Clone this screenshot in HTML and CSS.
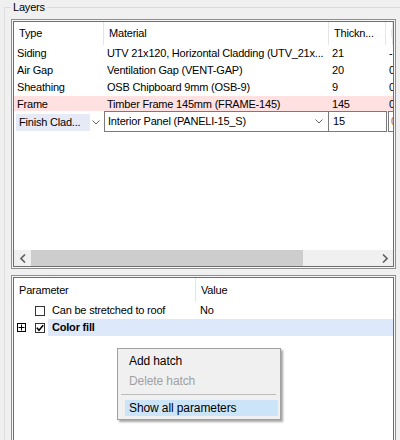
FILE: index.html
```html
<!DOCTYPE html>
<html>
<head>
<meta charset="utf-8">
<link rel="stylesheet" href="styles.css">
</head>
<body>
<fieldset class="group">
  <legend class="group-title">Layers</legend>
  <div class="frame frame-top">
    <div class="frame-inner">
      <div class="grid">
        <div class="row head">
          <div class="c c1">Type</div>
          <div class="c c2">Material</div>
          <div class="c c3">Thickn...</div>
          <div class="c c4">I</div>
        </div>
        <div class="row">
          <div class="c c1">Siding</div>
          <div class="c c2">UTV 21x120, Horizontal Cladding (UTV_21x...</div>
          <div class="c c3">21</div>
          <div class="c c4">-1</div>
        </div>
        <div class="row">
          <div class="c c1">Air Gap</div>
          <div class="c c2">Ventilation Gap (VENT-GAP)</div>
          <div class="c c3">20</div>
          <div class="c c4">0</div>
        </div>
        <div class="row">
          <div class="c c1">Sheathing</div>
          <div class="c c2">OSB Chipboard 9mm (OSB-9)</div>
          <div class="c c3">9</div>
          <div class="c c4">0</div>
        </div>
        <div class="row pink">
          <div class="c c1">Frame</div>
          <div class="c c2">Timber Frame 145mm (FRAME-145)</div>
          <div class="c c3">145</div>
          <div class="c c4">0</div>
        </div>
        <div class="row edit">
          <div class="combo combo-type">
            <span class="combo-sel">Finish Clad...</span>
            <svg class="chev" width="8" height="5" viewBox="0 0 8 5"><path d="M0.5 0.5 L4 4 L7.5 0.5" fill="none" stroke="#606060" stroke-width="1"/></svg>
          </div>
          <div class="combo combo-mat">
            <span class="combo-text">Interior Panel (PANELI-15_S)</span>
            <svg class="chev" width="8" height="5" viewBox="0 0 8 5"><path d="M0.5 0.5 L4 4 L7.5 0.5" fill="none" stroke="#606060" stroke-width="1"/></svg>
          </div>
          <div class="tbox">15</div>
          <div class="tbox tbox-last">0</div>
        </div>
      </div>
      <div class="hscroll">
        <div class="sarrow">
          <svg width="6" height="9" viewBox="0 0 6 9"><path d="M5 0.5 L1 4.5 L5 8.5" fill="none" stroke="#606060" stroke-width="1.6"/></svg>
        </div>
        <div class="track"><div class="thumb"></div></div>
        <div class="sarrow">
          <svg width="6" height="9" viewBox="0 0 6 9"><path d="M1 0.5 L5 4.5 L1 8.5" fill="none" stroke="#606060" stroke-width="1.6"/></svg>
        </div>
      </div>
    </div>
  </div>
  <div class="frame frame-bottom">
    <div class="frame-inner">
      <div class="prow phead">
        <div class="pc pc1">Parameter</div>
        <div class="pc pc2">Value</div>
      </div>
      <div class="prow">
        <div class="pc pc1 pcell">
          <span class="exp-space"></span>
          <span class="chk"></span>
          <span class="plabel">Can be stretched to roof</span>
        </div>
        <div class="pc pc2 pval">No</div>
      </div>
      <div class="prow">
        <div class="pc pc1 pcell">
          <span class="exp">
            <svg width="7" height="7" viewBox="0 0 7 7"><path d="M0.5 3.5 H6.5 M3.5 0.5 V6.5" stroke="#000" stroke-width="1"/></svg>
          </span>
          <span class="chk">
            <svg width="8" height="8" viewBox="0 0 8 8"><path d="M0.8 3.8 L3 6.2 L7.2 1.2" fill="none" stroke="#000" stroke-width="1.6"/></svg>
          </span>
          <span class="plabel hl bold">Color fill</span>
        </div>
        <div class="pc pc2 pval hl"></div>
      </div>
    </div>
  </div>
</fieldset>

<div class="menu">
  <div class="mitem">Add hatch</div>
  <div class="mitem disabled">Delete hatch</div>
  <div class="msep"></div>
  <div class="mitem active">Show all parameters</div>
</div>
</body>
</html>
```

FILE: styles.css
```css
html, body {
  margin: 0;
  padding: 0;
  width: 400px;
  height: 440px;
  overflow: hidden;
  background: #f0f0f0;
}

body {
  position: relative;
  font-family: "Liberation Sans", Arial, sans-serif;
  font-size: 11px;
  letter-spacing: -0.2px;
  color: #000;
}

.group {
  margin: 0 0 0 4px;
  padding: 4px 0 0 6px;
  border: 1px solid #dcdcdc;
  width: 420px;
  height: 480px;
  box-sizing: border-box;
  min-width: 0;
}

.group-title {
  padding: 0 2px;
  margin: 0;
  line-height: 15px;
  font-size: 11px;
}

.frame {
  width: 385px;
  box-sizing: border-box;
  border: 1px solid #8e8e8e;
  padding: 1px;
  background: #f7f7f7;
}

.frame-inner {
  border: 1px solid #6e6e6e;
  background: #fff;
  display: flex;
  flex-direction: column;
  overflow: hidden;
}

.frame-top .frame-inner {
  height: 246px;
  box-sizing: border-box;
}

.frame-bottom {
  margin-top: 6px;
}

.frame-bottom .frame-inner {
  height: 200px;
}

.grid {
  flex: 1;
  overflow: hidden;
}

.row {
  display: flex;
  height: 17px;
  line-height: 17px;
  white-space: nowrap;
}

.row.head {
  height: 23px;
  line-height: 23px;
}

.c {
  overflow: hidden;
  box-sizing: border-box;
  padding-left: 3px;
}

.head .c {
  padding-left: 5px;
  border-right: 1px solid #e5e5e5;
}

.c1 { width: 90px; }
.c2 { width: 225px; }
.c3 { width: 57px; }
.c4 { flex: 1; min-width: 0; }

.pink {
  background: #ffe1e1;
}

.row.edit {
  height: 21px;
  line-height: 19px;
  margin-top: -2px;
}

.combo {
  display: flex;
  align-items: center;
  box-sizing: border-box;
  height: 21px;
}

.combo-type {
  width: 90px;
  padding: 2px 4px 1px 2px;
  background: #fff;
}

.combo-sel {
  flex: 1;
  height: 17px;
  line-height: 17px;
  background: #e6eaf7;
  padding-left: 3px;
  overflow: hidden;
}

.combo-type .chev {
  margin-left: 2px;
}

.combo-mat {
  width: 225px;
  border: 1px solid #7a7a7a;
  padding: 0 5px 0 3px;
  background: #fff;
}

.combo-text {
  flex: 1;
  overflow: hidden;
}

.tbox {
  box-sizing: border-box;
  width: 59px;
  height: 21px;
  margin-left: -1px;
  border: 1px solid #7a7a7a;
  padding-left: 4px;
  background: #fff;
}

.tbox-last {
  flex: 1;
  width: auto;
  margin-left: 1px;
  border-right: none;
  padding-left: 2px;
  color: #c06a00;
  overflow: hidden;
}

.hscroll {
  display: flex;
  height: 16px;
  background: #f0f0f0;
}

.sarrow {
  width: 17px;
  display: flex;
  align-items: center;
  justify-content: center;
}

.track {
  flex: 1;
  display: flex;
}

.thumb {
  width: 272px;
  background: #cdcdcd;
}

.prow {
  display: flex;
  height: 17px;
  line-height: 17px;
  white-space: nowrap;
}

.prow.phead {
  height: 24px;
  line-height: 24px;
}

.pc {
  box-sizing: border-box;
}

.pc1 {
  width: 182px;
}

.phead .pc {
  padding-left: 5px;
}

.phead .pc1 {
  border-right: 1px solid #e5e5e5;
}

.pc2 {
  flex: 1;
}

.pcell {
  display: flex;
  align-items: center;
}

.exp-space,
.exp {
  width: 9px;
  height: 9px;
  margin-left: 3px;
  box-sizing: border-box;
  flex: none;
}

.exp {
  border: 1px solid #000;
  display: flex;
  align-items: center;
  justify-content: center;
}

.chk {
  width: 10px;
  height: 10px;
  margin-left: 9px;
  box-sizing: border-box;
  border: 1px solid #333;
  background: #fff;
  display: flex;
  align-items: center;
  justify-content: center;
  flex: none;
}

.plabel {
  flex: 1;
  height: 17px;
  margin-left: 3px;
  padding-left: 4px;
}

.pval {
  padding-left: 4px;
}

.hl {
  background: #dde8fb;
}

.bold {
  font-weight: bold;
}

.menu {
  position: absolute;
  left: 117px;
  top: 348px;
  width: 164px;
  box-sizing: border-box;
  border: 1px solid #a0a0a0;
  background: #f0f0f0;
  padding: 2px 2px 1px 7px;
  box-shadow: 2px 2px 2px rgba(0, 0, 0, 0.35);
  font-size: 12px;
  letter-spacing: -0.1px;
}

.mitem {
  height: 20px;
  line-height: 20px;
  padding-left: 4px;
}

.mitem.disabled {
  color: #a0a0a0;
}

.msep {
  height: 1px;
  background: #bdbdbd;
  margin: 3px 2px 5px -4px;
}

.mitem.active {
  height: 16px;
  line-height: 16px;
  margin: 2px 0;
  background: #cce4f7;
}
```
